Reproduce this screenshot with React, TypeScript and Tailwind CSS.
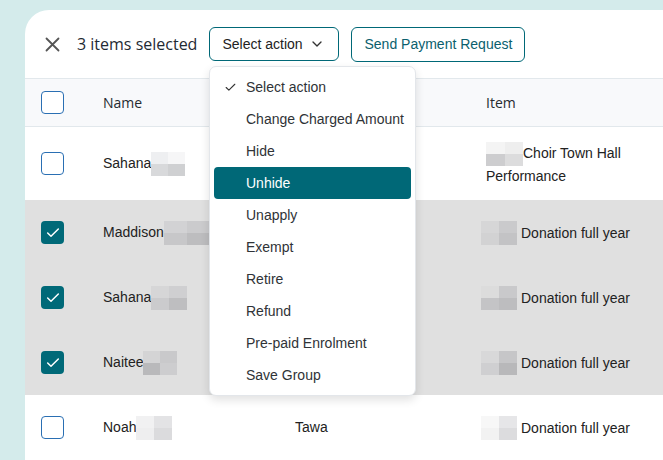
import React from 'react';
import { Check, ChevronDown } from 'lucide-react';

type Row = {
  name: string;
  blur: string[];
  blurW: string;
  group?: string;
  item: React.ReactNode;
  itemBlur: string[];
  checked: boolean;
  tall?: boolean;
};

const rows: Row[] = [
  { name: 'Sahana', blur: ['#eeeff1', '#f6f6f7', '#d8d9db', '#cfd0d2'], blurW: 'w-[34px]', item: 'Choir Town Hall Performance', itemBlur: ['#f4f4f4', '#eeeeee', '#cdcdcf', '#dcdcdd'], checked: false, tall: true },
  { name: 'Maddison', blur: ['#d2d2d4', '#cbcbcd', '#c7c7c9', '#bdbdbf'], blurW: 'w-[46px]', item: 'Donation full year', itemBlur: ['#d6d6d7', '#cacacc', '#d2d2d3', '#c3c3c5'], checked: true },
  { name: 'Sahana', blur: ['#d6d6d7', '#cfcfd1', '#cbcbcd', '#bebec0'], blurW: 'w-[36px]', item: 'Donation full year', itemBlur: ['#dcdcdc', '#c9c9cb', '#c4c4c6', '#bdbdbf'], checked: true },
  { name: 'Naitee', blur: ['#d4d4d5', '#c9c9cb', '#b9b9bb', '#cdcdcf'], blurW: 'w-[34px]', item: 'Donation full year', itemBlur: ['#d8d8d9', '#c6c6c8', '#cfcfd1', '#b8b8ba'], checked: true },
  { name: 'Noah', group: 'Tawa', blur: ['#f1f1f2', '#e3e3e5', '#eeeeef', '#dbdbdd'], blurW: 'w-[36px]', item: 'Donation full year', itemBlur: ['#f7f7f7', '#e6e6e8', '#f2f2f2', '#dcdcde'], checked: false },
];

const actions = [
  'Select action',
  'Change Charged Amount',
  'Hide',
  'Unhide',
  'Unapply',
  'Exempt',
  'Retire',
  'Refund',
  'Pre-paid Enrolment',
  'Save Group',
];

const Blur = ({ cells, w }: { cells: string[]; w: string }) => (
  <span className={`inline-grid grid-cols-2 grid-rows-2 h-[24px] ${w} align-middle`}>
    {cells.map((c, i) => (
      <span key={i} style={{ backgroundColor: c }} />
    ))}
  </span>
);

const Box = ({ checked }: { checked: boolean }) =>
  checked ? (
    <div className="w-[23px] h-[23px] rounded-[4px] bg-[#006978] flex items-center justify-center">
      <Check size={16} strokeWidth={2.2} className="text-white" />
    </div>
  ) : (
    <div className="w-[23px] h-[23px] rounded-[4px] border-[1.5px] border-[#2a6fb3] bg-white" />
  );

export default function App() {
  return (
    <div className="w-[663px] h-[460px] overflow-hidden bg-[#d4ebeb] pt-[10px] pl-[25px] font-['Liberation_Sans',Arial,sans-serif]">
      <div className="relative h-[500px] bg-white rounded-tl-[24px] text-[14px] text-[#222]">
        {/* toolbar */}
        <div className="h-[68px] flex items-center pl-[20px]">
          <svg width="15" height="15" viewBox="0 0 15 15" className="mr-[17px]">
            <path d="M1.5 1.5 L13.5 13.5 M13.5 1.5 L1.5 13.5" stroke="#555" strokeWidth="1.8" strokeLinecap="round" />
          </svg>
          <span className="font-['Open_Sans',sans-serif] text-[16px] text-[#1f2a33] mr-[12px]">3 items selected</span>
          <button className="h-[34px] w-[130px] border border-[#006877] rounded-[6px] flex items-center pl-[12px] text-[14px] text-[#222] mr-[12px]">
            Select action
            <ChevronDown size={16} strokeWidth={2} className="ml-[6px] text-[#333]" />
          </button>
          <button className="h-[35px] w-[174px] border border-[#006877] rounded-[6px] text-[14px] text-[#0b5f6e]">
            Send Payment Request
          </button>
        </div>

        {/* table header */}
        <div className="h-[49px] flex items-center bg-[#f8f9fb] border-y border-[#e2e8ec] font-['Open_Sans',sans-serif] text-[14px] text-[#262b30]">
          <div className="w-[78px] pl-[16px]">
            <Box checked={false} />
          </div>
          <div className="w-[383px]">Name</div>
          <div>Item</div>
        </div>

        {/* rows */}
        {rows.map((r, i) => (
          <div key={i} className={`flex items-center ${r.tall ? 'h-[73px]' : 'h-[65px]'} ${r.checked ? 'bg-[#e0e0e0]' : 'bg-white'}`}>
            <div className="w-[78px] pl-[16px]">
              <Box checked={r.checked} />
            </div>
            <div className="w-[192px] flex items-center">
              <span>{r.name}</span>
              <Blur cells={r.blur} w={r.blurW} />
            </div>
            <div className="w-[191px]">{r.group ?? ''}</div>
            <div className="flex-1 leading-[20px]">
              {r.tall ? (
                <div className="w-[150px]">
                  <Blur cells={r.itemBlur} w="w-[37px]" />
                  {r.item}
                </div>
              ) : (
                <div className="flex items-center -ml-[5px]">
                  <Blur cells={r.itemBlur} w="w-[36px]" />
                  <span className="ml-[4px]">{r.item}</span>
                </div>
              )}
            </div>
          </div>
        ))}

        {/* dropdown menu */}
        <div className="absolute left-[184px] top-[56px] w-[207px] py-[4px] bg-white border border-[#e3e6ea] rounded-[7px] shadow-[0_4px_10px_rgba(0,0,0,0.12)]">
          {actions.map((a, i) => (
            <div
              key={a}
              className={`h-[32px] mx-[4px] rounded-[4px] flex items-center whitespace-nowrap ${i === 3 ? 'bg-[#006877] text-white' : 'text-[#2f3337]'}`}
            >
              <span className="w-[32px] flex justify-end pr-[9px]">
                {i === 0 && <Check size={13} strokeWidth={2} className="text-[#333]" />}
              </span>
              {a}
            </div>
          ))}
        </div>
      </div>
    </div>
  );
}
